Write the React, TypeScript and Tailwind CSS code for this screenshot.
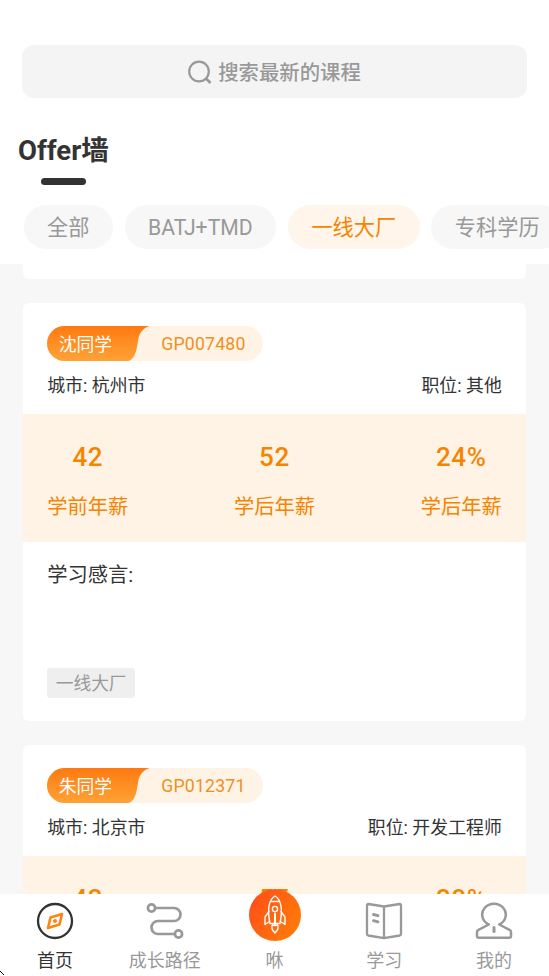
import { useState } from "react";
import clsx from "clsx";

const filters = ["全部", "BATJ+TMD", "一线大厂", "专科学历"];

const offers = [
  {
    name: "沈同学",
    code: "GP007480",
    city: "杭州市",
    job: "其他",
    before: "42",
    after: "52",
    rise: "24%",
    tag: "一线大厂",
  },
  {
    name: "朱同学",
    code: "GP012371",
    city: "北京市",
    job: "开发工程师",
    before: "43",
    after: "55",
    rise: "28%",
    tag: "一线大厂",
  },
];

type Offer = (typeof offers)[number];

function Stat({ value, label }: { value: string; label: string }) {
  return (
    <div className="flex flex-col items-center text-[#f58400]">
      <div className="text-[26px] leading-[30px] font-medium tracking-[0.6px]">{value}</div>
      <div className="mt-[19.5px] text-[20.3px] leading-[30px]">{label}</div>
    </div>
  );
}

function OfferCard({ offer }: { offer: Offer }) {
  return (
    <div className="h-[418.5px] shrink-0 rounded-md bg-white pt-[23.5px]">
      <div className="mx-6 flex h-[35px] w-[216px] items-center overflow-hidden rounded-full bg-[#fff3e6]">
        <div className="relative h-full w-[103px] shrink-0">
          <svg className="absolute inset-0" width="103" height="35" viewBox="0 0 103 35">
            <defs>
              <linearGradient id={"tag" + offer.code} x1="0" y1="0" x2="0" y2="1">
                <stop offset="0" stopColor="#ff7a10" />
                <stop offset="1" stopColor="#ffa236" />
              </linearGradient>
            </defs>
            <path
              d="M0 0H102.500C96 2 92.500 7 91.300 13C90 21 89 33 81.500 35H0Z"
              fill={`url(#tag${offer.code})`}
            />
          </svg>
          <div className="relative pt-px pl-[11.5px] text-[17.8px] leading-[35px] text-white">
            {offer.name}
          </div>
        </div>
        <div className="pt-[2px] pl-[11px] text-[17.7px] tracking-[0.2px] text-[#f0901e]">{offer.code}</div>
      </div>
      <div className="flex h-[53px] justify-between px-6 pt-[11px] text-[17.9px] leading-[28px] text-[#333]">
        <div>城市: {offer.city}</div>
        <div>职位: {offer.job}</div>
      </div>
      <div className="flex h-32 justify-between bg-[#fff3e6] px-6 pt-[28px]">
        <Stat value={offer.before} label="学前年薪" />
        <Stat value={offer.after} label="学后年薪" />
        <Stat value={offer.rise} label="学后年薪" />
      </div>
      <div className="px-6 pt-[18px]">
        <div className="h-[108px] text-[20.3px] leading-[30px] text-[#333]">学习感言:</div>
        <span className="flex h-[30px] w-[88px] items-center justify-center rounded-[3px] bg-[#efefef] pt-[2px] text-[17.7px] text-[#999]">
          {offer.tag}
        </span>
      </div>
    </div>
  );
}

function CompassIcon() {
  return (
    <svg width="38" height="38" viewBox="0 0 38 38" fill="none">
      <circle cx="19" cy="19" r="17" stroke="#333" strokeWidth="2.3" />
      <path d="M12 26L14.500 15.500L26 12L23.500 22.500Z" stroke="#ff8410" strokeWidth="2.600" strokeLinejoin="round" />
      <circle cx="19" cy="19" r="2" fill="#ff8410" />
    </svg>
  );
}

function PathIcon() {
  return (
    <svg width="38" height="38" viewBox="0 0 38 38" fill="none" stroke="#999" strokeWidth="2.7">
      <circle cx="5.500" cy="6" r="3.600" />
      <circle cx="32.500" cy="32" r="3.600" />
      <path d="M9 6H28A6.500 6.500 0 0 1 28 19H12A6.500 6.500 0 0 0 12 32H29" />
    </svg>
  );
}

function BookIcon() {
  return (
    <svg width="38" height="38" viewBox="0 0 38 38" fill="none" stroke="#999" strokeWidth="2.3" strokeLinejoin="round">
      <path d="M19 4.500L3.500 2Q2 2 2 3.500V32Q2 33.200 3.500 33.500L19 36.200L34.500 33.500Q36 33.200 36 32V3.500Q36 2 34.500 2ZM19 4.500V36" />
      <path d="M8.500 12.500L13 13.700M8.500 18.700L13 19.900" strokeWidth="2.900" strokeLinecap="round" />
    </svg>
  );
}

function UserIcon() {
  return (
    <svg width="38" height="38" viewBox="0 0 38 38" fill="none" stroke="#999" strokeWidth="2.5" strokeLinejoin="round">
      <path d="M13.800 22.500A11.800 11 0 1 1 24.200 22.500L34.500 27.800Q36 28.500 36 30V34Q36 35.800 34 35.800H4Q2 35.800 2 34V30Q2 28.500 3.500 27.800Z" />
      <path d="M19 25.500V29.500" strokeWidth="3" strokeLinecap="round" />
    </svg>
  );
}

function RocketIcon() {
  return (
    <svg width="52" height="52" viewBox="0 0 52 52" fill="none">
      <defs>
        <linearGradient id="rocket" x1="0" y1="0.2" x2="1" y2="0.8">
          <stop offset="0" stopColor="#ff4f18" />
          <stop offset="1" stopColor="#ff7d08" />
        </linearGradient>
      </defs>
      <circle cx="26" cy="26" r="26" fill="url(#rocket)" />
      <g stroke="#fff" strokeWidth="1.4" strokeLinejoin="round" strokeLinecap="round">
        <path d="M21 34.500C18.500 22 19.500 11 26 7C32.500 11 33.500 22 31 34.500Z" />
        <path d="M21.800 12.500H30.200" />
        <circle cx="26" cy="20" r="2.600" />
        <path d="M20 22.500L16 28V35.500L20.500 32.500M32 22.500L36 28V35.500L31.500 32.500" />
        <path d="M26 24.500V35" strokeWidth="2" />
        <path d="M23.500 35.500C21.500 39 24 42 26 44C28 42 30.500 39 28.500 35.500C27 37 25 37 23.500 35.500Z" />
      </g>
    </svg>
  );
}

const tabs = [
  { label: "首页", icon: <CompassIcon /> },
  { label: "成长路径", icon: <PathIcon /> },
  { label: "咻", icon: <RocketIcon /> },
  { label: "学习", icon: <BookIcon /> },
  { label: "我的", icon: <UserIcon /> },
];

export default function App() {
  const [filter, setFilter] = useState("一线大厂");
  const [tab, setTab] = useState("首页");

  return (
    <div className="relative flex h-screen flex-col overflow-hidden bg-[#f7f7f7] font-[Roboto,'Noto_Sans_CJK_SC',sans-serif]">
      <header className="h-[264px] shrink-0 bg-white pt-[45px]">
        <div className="mx-[22px] flex h-[53px] items-center justify-center rounded-xl bg-[#f4f4f4] text-[#999]">
          <svg width="24" height="24" viewBox="0 0 24 24" fill="none" stroke="currentColor" strokeWidth="2.2">
            <circle cx="11" cy="11.500" r="9.800" />
            <path d="M18 18.500L22.500 23" strokeWidth="2.600" />
          </svg>
          <span className="ml-[6px] pt-[3px] text-[20.4px] font-medium">搜索最新的课程</span>
        </div>
        <h1 className="mt-[36px] pl-[18px] text-[27.5px] leading-[34px] font-bold text-[#333]">
          Offer墙
        </h1>
        <div className="mt-[10px] ml-[41px] h-[6.5px] w-[44.500px] rounded-full bg-[#333]" />
        <div className="mt-[20.5px] flex gap-[11.700px] overflow-hidden pl-[23.500px]">
          {filters.map((item) => (
            <button
              key={item}
              onClick={() => setFilter(item)}
              className={clsx(
                "h-11 shrink-0 rounded-full px-[23.5px] pt-[2px] text-[21.2px]",
                filter === item ? "bg-[#fff5ea] text-[#f58400]" : "bg-[#f7f7f7] text-[#999]"
              )}
            >
              {item}
            </button>
          ))}
        </div>
      </header>

      <main className="flex min-h-0 flex-1 flex-col gap-[23.500px] overflow-hidden px-[23.200px]">
        <div className="h-[15px] shrink-0 rounded-b-md bg-white" />
        {offers.map((offer) => (
          <OfferCard key={offer.code} offer={offer} />
        ))}
      </main>

      <nav className="z-10 grid h-[82px] shrink-0 grid-cols-5 bg-white">
        {tabs.map((item) => (
          <button
            key={item.label}
            onClick={() => setTab(item.label)}
            className={clsx(
              "flex h-[81px] flex-col items-center justify-end text-[18px] leading-[28px]",
              tab === item.label ? "text-[#333]" : "text-[#999]"
            )}
          >
            <span className={item.label === "咻" ? "mb-[6px] ml-px" : "mb-[7px]"}>{item.icon}</span>
            {item.label}
          </button>
        ))}
      </nav>

      <svg className="absolute bottom-0 left-0 z-20" width="5" height="5" viewBox="0 0 5 5">
        <path d="M0 0H1V1H2V2H3V3H4V4H3V3H2V2H1V1H0Z" fill="#111" />
      </svg>
    </div>
  );
}
